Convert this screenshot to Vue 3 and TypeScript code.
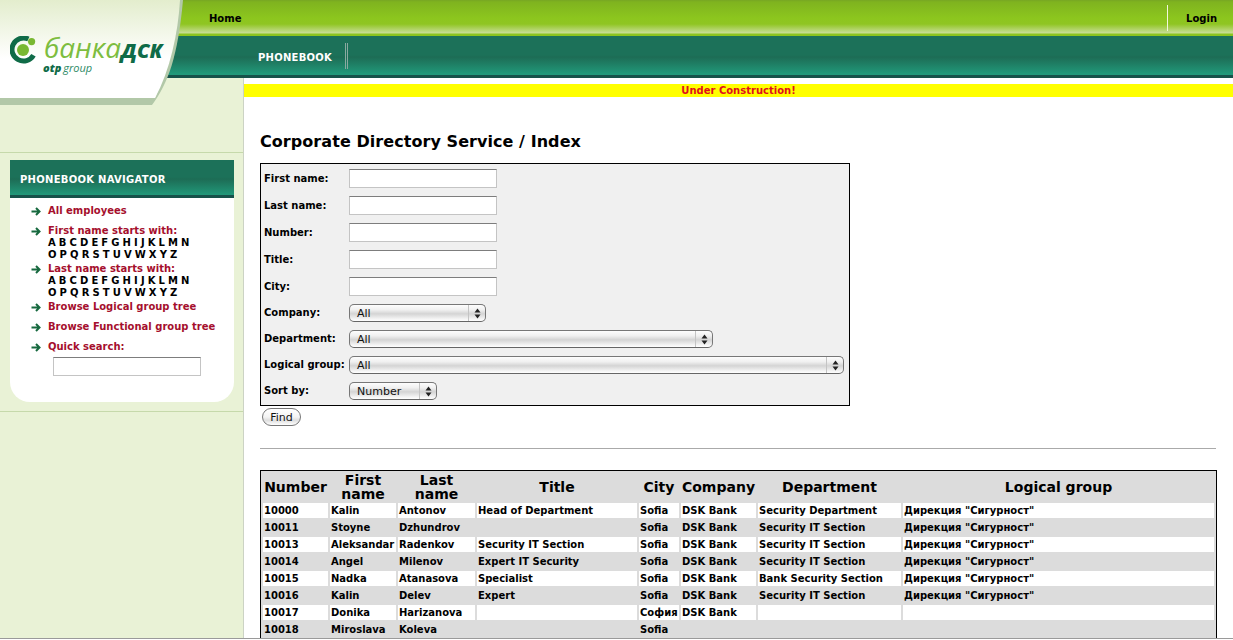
<script setup lang="ts">
interface Employee {
  number: string
  first: string
  last: string
  title: string
  city: string
  company: string
  department: string
  group: string
}

const bank = 'DSK Bank'
const groupName = 'Дирекция "Сигурност"'

const textFields = ['First name:', 'Last name:', 'Number:', 'Title:', 'City:']

const selectFields = [
  { label: 'Company:', value: 'All', size: 'sel-company' },
  { label: 'Department:', value: 'All', size: 'sel-department' },
  { label: 'Logical group:', value: 'All', size: 'sel-group' },
  { label: 'Sort by:', value: 'Number', size: 'sel-sort' },
]

const lettersTop = 'A B C D E F G H I J K L M N'.split(' ')
const lettersBottom = 'O P Q R S T U V W X Y Z'.split(' ')

const employees: Employee[] = [
  { number: '10000', first: 'Kalin', last: 'Antonov', title: 'Head of Department', city: 'Sofia', company: bank, department: 'Security Department', group: groupName },
  { number: '10011', first: 'Stoyne', last: 'Dzhundrov', title: '', city: 'Sofia', company: bank, department: 'Security IT Section', group: groupName },
  { number: '10013', first: 'Aleksandar', last: 'Radenkov', title: 'Security IT Section', city: 'Sofia', company: bank, department: 'Security IT Section', group: groupName },
  { number: '10014', first: 'Angel', last: 'Milenov', title: 'Expert IT Security', city: 'Sofia', company: bank, department: 'Security IT Section', group: groupName },
  { number: '10015', first: 'Nadka', last: 'Atanasova', title: 'Specialist', city: 'Sofia', company: bank, department: 'Bank Security Section', group: groupName },
  { number: '10016', first: 'Kalin', last: 'Delev', title: 'Expert', city: 'Sofia', company: bank, department: 'Security IT Section', group: groupName },
  { number: '10017', first: 'Donika', last: 'Harizanova', title: '', city: 'София', company: bank, department: '', group: '' },
  { number: '10018', first: 'Miroslava', last: 'Koleva', title: '', city: 'Sofia', company: '', department: '', group: '' },
]
</script>

<template>
  <div class="page">
    <header class="header">
      <div class="top-bar">
        <a class="home-link">Home</a>
        <a class="login-link">Login</a>
      </div>
      <div class="sub-bar">
        <a class="phonebook-link">PHONEBOOK</a>
      </div>
    </header>

    <div class="logo-panel">
      <svg class="logo-bg" width="190" height="106" viewBox="0 0 190 106">
        <defs>
          <linearGradient id="panelFill" x1="0" y1="0" x2="0" y2="1">
            <stop offset="0" stop-color="#e3edcd" />
            <stop offset="0.6" stop-color="#ffffff" />
          </linearGradient>
        </defs>
        <path d="M0 98V105H152C168 84 178 56 183 0H178C176 36 168 70 155 98Z" fill="#b2c8a8" />
        <path d="M0 0H180C178 34 170 70 155 98H0Z" fill="url(#panelFill)" />
      </svg>
      <div class="logo">
        <svg class="logo-mark" width="30" height="28" viewBox="0 0 30 28">
          <path d="M18.4 3.1A11.5 11.5 0 1 0 23.5 19.2" fill="none" stroke="#0f6b47" stroke-width="5" />
          <circle cx="13" cy="14" r="6" fill="#79b832" />
          <circle cx="21.6" cy="5.6" r="3.6" fill="#79b832" />
        </svg>
        <div class="logo-text">
          <div class="logo-name"><span class="logo-light">банка</span><span class="logo-dark">ДСК</span></div>
          <div class="logo-sub"><b>otp</b> group</div>
        </div>
      </div>
    </div>

    <div class="content">
      <aside class="sidebar">
        <section class="nav-card">
          <h2 class="nav-title">PHONEBOOK NAVIGATOR</h2>
          <div class="nav-body">
            <div class="nav-item">
              <svg class="arrow" width="10" height="9" viewBox="0 0 10 9"><path d="M0.5 4.5H8M5 1l3.5 3.5L5 8" fill="none" stroke="#17693f" stroke-width="2" /></svg>
              <a class="nav-link">All employees</a>
            </div>
            <div class="nav-item tight">
              <svg class="arrow" width="10" height="9" viewBox="0 0 10 9"><path d="M0.5 4.5H8M5 1l3.5 3.5L5 8" fill="none" stroke="#17693f" stroke-width="2" /></svg>
              <div>
                <a class="nav-link">First name starts with:</a>
                <div class="letters"><a v-for="l in lettersTop" :key="l">{{ l }}</a></div>
                <div class="letters"><a v-for="l in lettersBottom" :key="l">{{ l }}</a></div>
              </div>
            </div>
            <div class="nav-item tight">
              <svg class="arrow" width="10" height="9" viewBox="0 0 10 9"><path d="M0.5 4.5H8M5 1l3.5 3.5L5 8" fill="none" stroke="#17693f" stroke-width="2" /></svg>
              <div>
                <a class="nav-link">Last name starts with:</a>
                <div class="letters"><a v-for="l in lettersTop" :key="l">{{ l }}</a></div>
                <div class="letters"><a v-for="l in lettersBottom" :key="l">{{ l }}</a></div>
              </div>
            </div>
            <div class="nav-item">
              <svg class="arrow" width="10" height="9" viewBox="0 0 10 9"><path d="M0.5 4.5H8M5 1l3.5 3.5L5 8" fill="none" stroke="#17693f" stroke-width="2" /></svg>
              <a class="nav-link">Browse Logical group tree</a>
            </div>
            <div class="nav-item">
              <svg class="arrow" width="10" height="9" viewBox="0 0 10 9"><path d="M0.5 4.5H8M5 1l3.5 3.5L5 8" fill="none" stroke="#17693f" stroke-width="2" /></svg>
              <a class="nav-link">Browse Functional group tree</a>
            </div>
            <div class="nav-item search-label">
              <svg class="arrow" width="10" height="9" viewBox="0 0 10 9"><path d="M0.5 4.5H8M5 1l3.5 3.5L5 8" fill="none" stroke="#17693f" stroke-width="2" /></svg>
              <a class="nav-link">Quick search:</a>
            </div>
            <input class="text-input quick-search" type="text" />
          </div>
        </section>
      </aside>

      <main class="main">
        <div class="notice">Under Construction!</div>
        <div class="main-inner">
          <h1 class="page-title">Corporate Directory Service / Index</h1>

          <form class="search-form" @submit.prevent>
            <div v-for="field in textFields" :key="field" class="form-row text-row">
              <label class="form-label">{{ field }}</label>
              <input class="text-input" type="text" />
            </div>
            <div v-for="field in selectFields" :key="field.label" class="form-row select-row">
              <label class="form-label">{{ field.label }}</label>
              <div class="select" :class="field.size">
                <span class="select-value">{{ field.value }}</span>
                <span class="select-arrows">
                  <svg width="7" height="11" viewBox="0 0 7 11">
                    <path d="M3.5 0.5L6.5 4.5H0.5Z M0.5 6.5H6.5L3.5 10.5Z" fill="#222" />
                  </svg>
                </span>
              </div>
            </div>
          </form>

          <button class="find-btn" type="button">Find</button>
          <hr class="divider" />

          <table class="results">
            <colgroup>
              <col style="width: 65px" />
              <col style="width: 66px" />
              <col style="width: 77px" />
              <col style="width: 160px" />
              <col style="width: 40px" />
              <col style="width: 75px" />
              <col style="width: 143px" />
              <col style="width: 311px" />
            </colgroup>
            <thead>
              <tr>
                <th>Number</th>
                <th>First name</th>
                <th>Last name</th>
                <th>Title</th>
                <th>City</th>
                <th>Company</th>
                <th>Department</th>
                <th>Logical group</th>
              </tr>
            </thead>
            <tbody>
              <tr v-for="(emp, i) in employees" :key="emp.number" :class="{ odd: i % 2 === 0 }">
                <td>{{ emp.number }}</td>
                <td>{{ emp.first }}</td>
                <td>{{ emp.last }}</td>
                <td>{{ emp.title }}</td>
                <td>{{ emp.city }}</td>
                <td>{{ emp.company }}</td>
                <td>{{ emp.department }}</td>
                <td>{{ emp.group }}</td>
              </tr>
            </tbody>
          </table>
        </div>
      </main>
    </div>

    <div class="window-edge"></div>
  </div>
</template>

<style>
html,
body {
  margin: 0;
  overflow: hidden;
  background: #fff;
}
</style>

<style scoped>
.page {
  position: relative;
  display: flex;
  flex-direction: column;
  width: 1233px;
  height: 640px;
  overflow: hidden;
  font-family: "DejaVu Sans", Verdana, sans-serif;
  font-size: 10px;
  color: #000;
}

/* header bars */
.header {
  flex: none;
  height: 78px;
}

.top-bar {
  display: flex;
  align-items: center;
  justify-content: space-between;
  height: 36px;
  padding: 0 16px 0 209px;
  box-sizing: border-box;
  font-weight: bold;
  background: linear-gradient(#77a623 0, #7fb31f 2px, #8cc61e 18px, #8fc522 24px, #c9dd97 33px, #8cc41f 34px, #8cc41f 36px);
}

.login-link {
  align-self: center;
  height: 26px;
  line-height: 28px;
  padding-left: 18px;
  border-left: 1px solid #f2f7dc;
}

.sub-bar {
  display: flex;
  align-items: center;
  height: 42px;
  padding-left: 258px;
  box-sizing: border-box;
  color: #fff;
  font-weight: bold;
  background: linear-gradient(#1c7159 0, #1c7159 19px, #1d6c55 21px, #21997a 38px, #21997a 39px, #16524a 39px, #16524a 42px);
}

.phonebook-link {
  height: 26px;
  line-height: 30px;
  margin-top: -3px;
  padding-right: 13px;
  letter-spacing: 0.25px;
  border-right: 3px double #8aa9a0;
}

/* logo */
.logo-panel {
  position: absolute;
  top: 0;
  left: 0;
  width: 190px;
  height: 106px;
}

.logo-bg {
  display: block;
}

.logo {
  position: absolute;
  top: 36px;
  left: 10px;
  display: flex;
  gap: 4px;
}

.logo-mark {
  flex: none;
}

.logo-name {
  font-family: "Open Sans", sans-serif;
  font-size: 28px;
  font-style: italic;
  line-height: 23px;
  white-space: nowrap;
}

.logo-light {
  color: #7dbd3f;
}

.logo-dark {
  color: #0f6b47;
  font-weight: 800;
  font-size: 20px;
}

.logo-sub {
  margin-left: -1px;
  font-family: "Open Sans", sans-serif;
  font-size: 11px;
  font-style: italic;
  line-height: 12px;
  word-spacing: -1px;
  color: #2c8a65;
}

.logo-sub b {
  color: #0f6b47;
  font-weight: 800;
}

/* sidebar */
.content {
  display: flex;
  flex: 1;
  min-height: 0;
}

.sidebar {
  flex: none;
  width: 244px;
  box-sizing: border-box;
  padding-top: 74px;
  background: #e9f2d6;
  border-right: 1px solid #ccd3c4;
}

.nav-card {
  padding: 7px 9px 9px 10px;
  border-top: 1px solid #c6d9ab;
  border-bottom: 1px solid #c6d9ab;
}

.nav-title {
  margin: 0;
  height: 38px;
  box-sizing: border-box;
  padding-left: 10px;
  border-bottom: 3px solid #16524a;
  font-size: 10px;
  letter-spacing: 0.28px;
  line-height: 39px;
  color: #fff;
  background: linear-gradient(#1c7159 0, #1c7159 17px, #1d6c55 19px, #21997a 35px);
}

.nav-body {
  display: flex;
  flex-direction: column;
  height: 204px;
  box-sizing: border-box;
  padding: 7px 0 0 21px;
  background: #fff;
  border-radius: 0 0 20px 20px;
}

.nav-item {
  display: flex;
  gap: 7px;
  margin-bottom: 8px;
  line-height: 12px;
}

.nav-item.tight {
  margin-bottom: 2px;
}

.nav-item.search-label {
  margin-bottom: 4px;
}

.arrow {
  flex: none;
  margin-top: 2px;
}

.nav-link {
  font-weight: bold;
  color: #a50f2d;
  white-space: nowrap;
}

.letters {
  display: flex;
  gap: 3.1px;
  font-weight: bold;
}

.quick-search {
  margin-left: 22px;
}

/* main */
.main {
  flex: 1;
  min-width: 0;
  padding-top: 6px;
}

.notice {
  height: 13px;
  line-height: 13px;
  text-align: center;
  font-weight: bold;
  color: #e0101a;
  background: #ffff00;
}

.main-inner {
  padding: 0 17px 0 16px;
}

.page-title {
  margin: 34px 0 10px;
  font-size: 16px;
  letter-spacing: 0.06px;
  line-height: 22px;
  font-weight: bold;
}

.search-form {
  width: 590px;
  box-sizing: border-box;
  padding: 1px 0 1px 3px;
  border: 1px solid #000;
  background: #f0f0f0;
}

.form-row {
  display: flex;
  align-items: center;
}

.text-row {
  height: 27px;
}

.select-row {
  height: 26px;
}

.select-row .form-label {
  margin-top: -2px;
}

.form-label {
  flex: none;
  width: 85px;
  font-weight: bold;
  white-space: nowrap;
}

.text-input {
  width: 148px;
  height: 19px;
  box-sizing: border-box;
  padding: 0 2px;
  background: #fff;
  border: 1px solid #c4c4c4;
  border-top-color: #7d7d7d;
  border-radius: 0;
  outline: none;
}

.select {
  display: flex;
  align-items: center;
  justify-content: space-between;
  height: 18px;
  box-sizing: border-box;
  padding-left: 7px;
  font-size: 11px;
  border: 1px solid #777;
  border-bottom-color: #666;
  border-radius: 5px;
  background: linear-gradient(#fdfdfd 0, #f0f0f0 30%, #d4d4d4 55%, #f2f2f2 85%, #ffffff 100%);
  color: #111;
}

.sel-company {
  width: 137px;
}

.sel-department {
  width: 364px;
}

.sel-group {
  width: 495px;
}

.sel-sort {
  width: 88px;
}

.select-arrows {
  display: flex;
  align-items: center;
  justify-content: center;
  width: 16px;
  height: 100%;
  border-left: 1px solid #c4c4c4;
}

.find-btn {
  display: block;
  width: 39px;
  height: 18px;
  margin: 2px 0 0 2px;
  padding: 0;
  font-family: inherit;
  font-size: 11px;
  color: #111;
  border: 1px solid #777;
  border-radius: 9px;
  background: linear-gradient(#fff 0, #f4f4f4 50%, #dedede 70%, #fff 100%);
}

.divider {
  height: 0;
  margin: 22px 0 21px;
  border: 0;
  border-top: 1px solid #aaa;
}

/* results */
.results {
  width: 957px;
  table-layout: fixed;
  border: 1px solid #000;
  border-collapse: separate;
  border-spacing: 2px;
  background: #dcdcdc;
}

.results th {
  height: 28px;
  padding: 0;
  font-size: 14px;
  line-height: 14px;
  text-align: center;
}

.results td {
  height: 15px;
  padding: 0 0 0 1px;
  font-weight: bold;
  line-height: 15px;
  white-space: nowrap;
  overflow: hidden;
}

.results tr.odd td {
  background: #fff;
}

/* bottom edge of the browser window, covers the cut-off end of the table */
.window-edge {
  position: absolute;
  right: 0;
  bottom: 0;
  left: 0;
  height: 1px;
  border-top: 1px solid #9a9a9a;
  background: #fff;
}
</style>
